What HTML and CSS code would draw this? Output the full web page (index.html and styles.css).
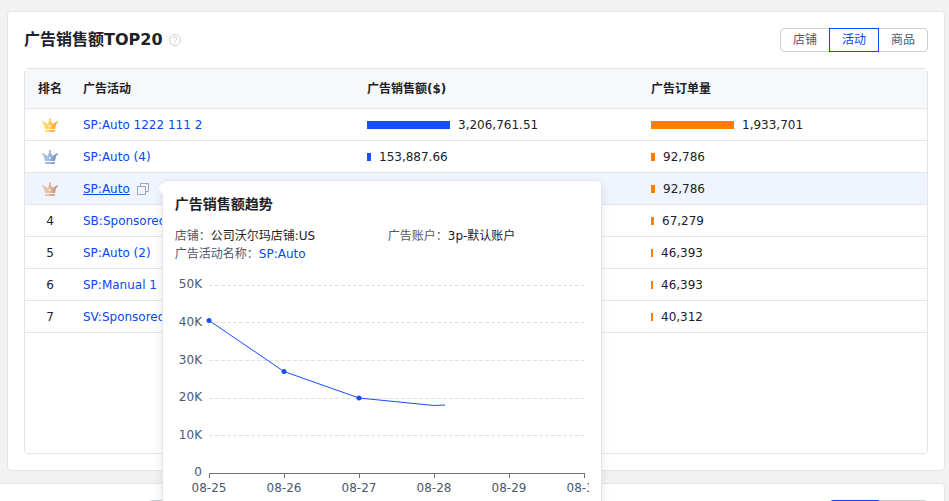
FILE: index.html
```
<!DOCTYPE html>
<html lang="zh-CN">
<head>
    <meta charset="UTF-8">
    <meta name="viewport" content="width=device-width, initial-scale=1.0">
    <title>广告销售额TOP20</title>
    <link rel="stylesheet" href="styles.css">
</head>
<body>

    <!-- crown shape shared by the first three ranks -->
    <svg class="sprite" aria-hidden="true">
        <defs>
            <linearGradient id="gold"><stop offset="0.4" stop-color="#ffd66e"/><stop offset="0.7" stop-color="#fcb040"/></linearGradient>
            <linearGradient id="silver"><stop offset="0.4" stop-color="#a9bfe2"/><stop offset="0.7" stop-color="#859fca"/></linearGradient>
            <linearGradient id="bronze"><stop offset="0.4" stop-color="#e8c3ac"/><stop offset="0.7" stop-color="#d0a086"/></linearGradient>
            <symbol id="crown" viewBox="0 0 18 16">
                <path d="M4 12 L2.5 6.5 L0.8 5.5 L1.2 4.2 L2.8 4.5 L6.5 7 L8.2 3.5 L8 1.5 L9 1 L10 1.5 L9.8 3.5 L11.5 7 L15.2 4.5 L16.800 4.200 L17.200 5.500 L15.500 6.500 L14 12 Z M9 7.500 L8 9 L9 10.500 L10 9 Z M4 13 H14 L13.500 15 H4.500 Z" fill-rule="evenodd"/>
            </symbol>
        </defs>
    </svg>

    <main class="page">
        <section class="card">
            <header class="card-header">
                <h2>广告销售额TOP20</h2>
                <svg class="help" viewBox="0 0 12 12" aria-hidden="true">
                    <circle cx="6" cy="6" r="5.500"/>
                    <path d="M4.200 4.800 A1.800 1.800 0 1 1 6.800 6.200 Q6 6.600 6 7.500 M6 8.300 V9.300"/>
                </svg>
                <div class="tabs">
                    <button type="button">店铺</button>
                    <button type="button" class="active">活动</button>
                    <button type="button">商品</button>
                </div>
            </header>

            <div class="table-box">
                <table>
                    <thead>
                        <tr>
                            <th class="rank">排名</th>
                            <th>广告活动</th>
                            <th>广告销售额($)</th>
                            <th>广告订单量</th>
                        </tr>
                    </thead>
                    <tbody>
                        <tr>
                            <td class="rank"><svg class="crown" fill="url(#gold)"><use href="#crown"/></svg></td>
                            <td><a href="#">SP:Auto 1222 111 2</a></td>
                            <td><span class="bar blue" style="width: 83px"></span>3,206,761.51</td>
                            <td><span class="bar orange" style="width: 83px"></span>1,933,701</td>
                        </tr>
                        <tr>
                            <td class="rank"><svg class="crown" fill="url(#silver)"><use href="#crown"/></svg></td>
                            <td><a href="#">SP:Auto (4)</a></td>
                            <td><span class="bar blue" style="width: 4px"></span>153,887.66</td>
                            <td><span class="bar orange" style="width: 4px"></span>92,786</td>
                        </tr>
                        <tr class="hover">
                            <td class="rank"><svg class="crown" fill="url(#bronze)"><use href="#crown"/></svg></td>
                            <td>
                                <div class="campaign">
                                    <a href="#">SP:Auto</a>
                                    <svg class="copy" viewBox="0 0 12 12" aria-hidden="true">
                                        <path d="M0.500 3.500 H8.500 V11.500 H0.500 Z M3.500 3.500 V0.500 H11.500 V8.500 H8.500"/>
                                    </svg>
                                    <div class="popover">
                                        <h3>广告销售额趋势</h3>
                                        <dl>
                                            <div><dt>店铺：</dt><dd>公司沃尔玛店铺:US</dd></div>
                                            <div><dt>广告账户：</dt><dd>3p-默认账户</dd></div>
                                            <div><dt>广告活动名称：</dt><dd><a href="#">SP:Auto</a></dd></div>
                                        </dl>
                                        <svg class="chart" viewBox="0 0 414 240">
                                            <g class="grid">
                                                <path d="M34 13.500 H409 M34 50.500 H409 M34 88.500 H409 M34 126.500 H409 M34 163.500 H409"/>
                                            </g>
                                            <path class="axis" d="M34 201.500 H410 M34.500 201 V206 M109.500 201 V206 M184.500 201 V206 M259.500 201 V206 M334.500 201 V206 M409.500 201 V206"/>
                                            <g class="y-labels">
                                                <text x="27" y="16">50K</text>
                                                <text x="27" y="54">40K</text>
                                                <text x="27" y="92">30K</text>
                                                <text x="27" y="129">20K</text>
                                                <text x="27" y="167">10K</text>
                                                <text x="27" y="204">0</text>
                                            </g>
                                            <g class="x-labels">
                                                <text x="34" y="220">08-25</text>
                                                <text x="109" y="220">08-26</text>
                                                <text x="184" y="220">08-27</text>
                                                <text x="259" y="220">08-28</text>
                                                <text x="334" y="220">08-29</text>
                                                <text x="409" y="220">08-30</text>
                                            </g>
                                            <polyline class="line" points="34,48.500 109,99.500 184,126 259,133.500 270,133"/>
                                            <g class="dots">
                                                <circle cx="34" cy="48.500" r="2.500"/>
                                                <circle cx="109" cy="99.500" r="2.500"/>
                                                <circle cx="184" cy="126" r="2.500"/>
                                            </g>
                                        </svg>
                                    </div>
                                </div>
                            </td>
                            <td></td>
                            <td><span class="bar orange" style="width: 4px"></span>92,786</td>
                        </tr>
                        <tr>
                            <td class="rank">4</td>
                            <td><a href="#">SB:Sponsored</a></td>
                            <td></td>
                            <td><span class="bar orange" style="width: 3px"></span>67,279</td>
                        </tr>
                        <tr>
                            <td class="rank">5</td>
                            <td><a href="#">SP:Auto (2)</a></td>
                            <td></td>
                            <td><span class="bar orange" style="width: 2px"></span>46,393</td>
                        </tr>
                        <tr>
                            <td class="rank">6</td>
                            <td><a href="#">SP:Manual 1</a></td>
                            <td></td>
                            <td><span class="bar orange" style="width: 2px"></span>46,393</td>
                        </tr>
                        <tr>
                            <td class="rank">7</td>
                            <td><a href="#">SV:Sponsored</a></td>
                            <td></td>
                            <td><span class="bar orange" style="width: 2px"></span>40,312</td>
                        </tr>
                    </tbody>
                </table>
            </div>
        </section>

        <section class="card card-next">
            <select aria-label="指标"></select>
            <div class="tabs">
                <button type="button" class="active"></button>
                <button type="button"></button>
            </div>
        </section>
    </main>

</body>
</html>
```
FILE: styles.css
```
* {
    margin: 0;
    padding: 0;
    box-sizing: border-box;
}
body {
    background: #f2f2f2;
    color: #1d2129;
    font-family: "DejaVu Sans", "Noto Sans CJK SC", sans-serif;
    font-size: 12px;
    line-height: 18px;
    overflow: hidden;
}
a {
    color: #0a47f0;
    text-decoration: none;
}
.sprite {
    position: absolute;
    width: 0;
    height: 0;
}
.page {
    padding: 11px 4px 0 7px;
}
.card {
    background: #fff;
    border: 1px solid #e4e5eb;
    border-radius: 4px;
    padding: 16px;
}
.card-header {
    display: flex;
    align-items: center;
    height: 24px;
    margin-bottom: 16px;
}
h2 {
    font-size: 16px;
    line-height: 24px;
}
.help {
    width: 12px;
    height: 12px;
    margin-left: 6px;
    fill: none;
    stroke: #c9cdd4;
}
.tabs {
    display: flex;
    margin-left: auto;
}
.tabs button {
    width: 50px;
    height: 24px;
    margin-left: -1px;
    background: #fff;
    border: 1px solid #c9cdd4;
    color: #4e5969;
    font: inherit;
}
.tabs button:first-child {
    border-radius: 4px 0 0 4px;
}
.tabs button:last-child {
    border-radius: 0 4px 4px 0;
}
.tabs .active {
    position: relative;
    border-color: #0a47f0;
    color: #0a47f0;
}

/* ranking table */
.table-box {
    min-height: 386px;
    border: 1px solid #e4e5eb;
    border-radius: 4px;
}
table {
    width: 100%;
    table-layout: fixed;
    border-spacing: 0;
}
th, td {
    height: 32px;
    padding: 0 8px;
    border-bottom: 1px solid #e4e5eb;
    text-align: left;
    white-space: nowrap;
}
th {
    height: 40px;
    background: #f7f8fa;
}
.rank {
    width: 50px;
    padding: 0;
    text-align: center;
}
.hover td {
    background: #f0f4ff;
}
.crown {
    display: block;
    width: 18px;
    height: 16px;
    margin: 0 auto;
}
.bar {
    display: inline-block;
    height: 8px;
    margin-right: 8px;
}
.blue {
    background: #1650f5;
}
.orange {
    background: #ff7d00;
}
.campaign {
    position: relative;
    display: inline-flex;
    align-items: center;
    gap: 7px;
}
.campaign > a {
    text-decoration: underline;
}
.copy {
    width: 12px;
    height: 12px;
    fill: none;
    stroke: #a0a5ae;
}

/* trend popover */
.popover {
    position: absolute;
    top: 0;
    left: 100%;
    width: 440px;
    margin-left: 13px;
    padding: 12px;
    background: #fff;
    border: 1px solid #e4e5eb;
    border-radius: 4px;
    box-shadow: 0 4px 10px rgba(0, 0, 0, 0.1);
    z-index: 1;
}
.popover::before {
    content: "";
    position: absolute;
    top: 4px;
    left: -4px;
    width: 7px;
    height: 7px;
    background: #fff;
    transform: rotate(45deg);
}
h3 {
    font-size: 14px;
    line-height: 22px;
}
dl {
    display: grid;
    grid-template-columns: 1fr 1fr;
    column-gap: 12px;
    margin: 12px 0 9px;
}
dl div {
    display: flex;
}
dt {
    color: #4e5969;
}
.chart {
    display: block;
    width: 100%;
}
.chart text {
    fill: #4e5969;
}
.grid {
    stroke: #e0e0e0;
    stroke-dasharray: 4 2;
}
.axis {
    fill: none;
    stroke: #6e7079;
}
.y-labels {
    text-anchor: end;
}
.x-labels {
    text-anchor: middle;
}
.line {
    fill: none;
    stroke: #1650f5;
}
.dots {
    fill: #1650f5;
}

/* following card */
.card-next {
    display: flex;
    margin: 12px 0 0 -16px;
    padding-left: 156px;
}
.card-next select {
    width: 200px;
    height: 24px;
    background: #fff;
    border: 1px solid #c9cdd4;
    border-radius: 4px;
}
```
